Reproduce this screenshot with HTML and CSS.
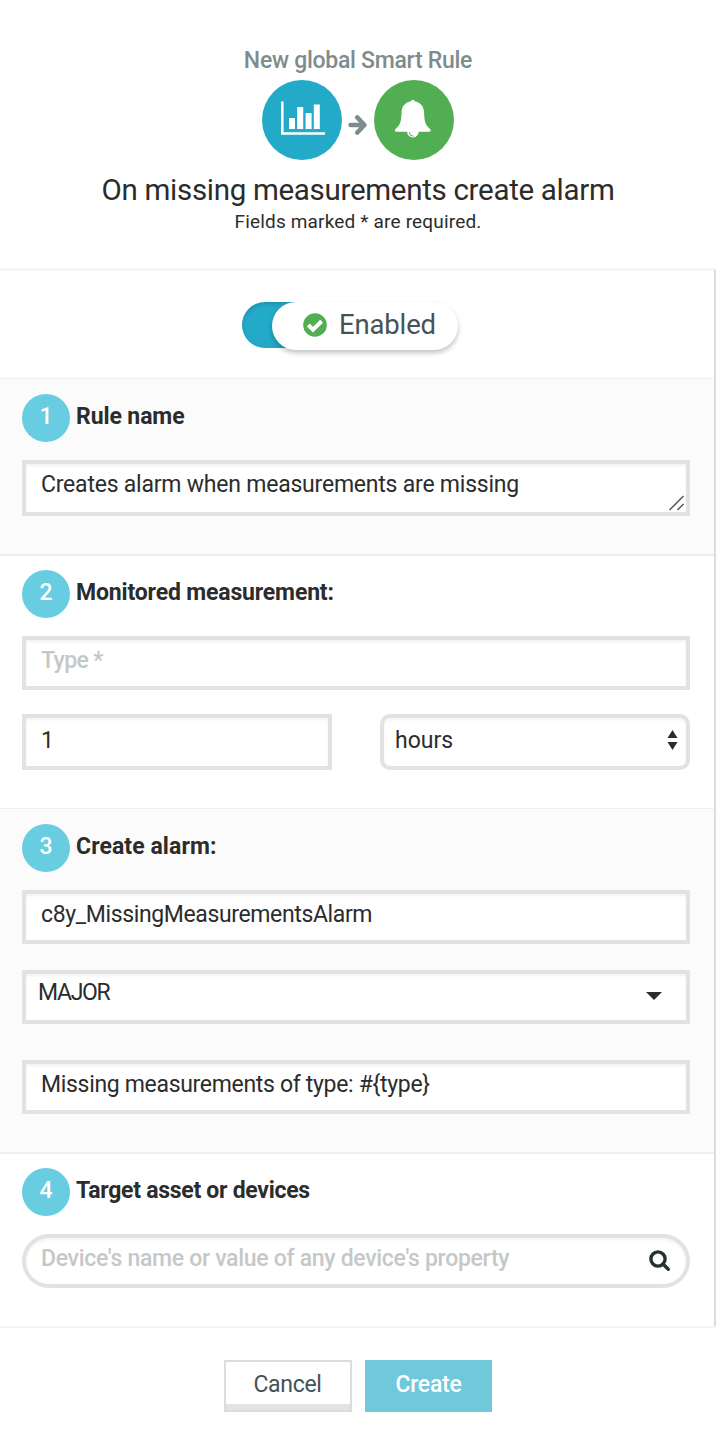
FILE: index.html
```html
<!DOCTYPE html>
<html lang="en">
<head>
<meta charset="utf-8">
<title>New global Smart Rule</title>
<link rel="stylesheet" href="styles.css">
</head>
<body>
<div class="modal">
  <header class="head">
    <div class="kicker"><span class="t-kicker">New global Smart Rule</span></div>
    <div class="icons">
      <span class="disc disc-blue">
        <svg width="80" height="80" viewBox="0 0 80 80"><path d="M20.300 21.500V53.500H63" fill="none" stroke="#fff" stroke-width="2.600"/><path d="M27 38h6v11h-6zM35.200 27h6v22h-6zM43.600 33h6v16h-6zM51.800 24.500h6v24.500h-6z" fill="#fff"/></svg>
      </span>
      <svg class="arrow" width="20" height="22" viewBox="0 0 20 22"><path d="M2.500 11H15M9.200 3.400L16.500 11L9.200 18.600" fill="none" stroke="#7f8c8d" stroke-width="4.500" stroke-linecap="round" stroke-linejoin="round"/></svg>
      <span class="disc disc-green">
        <svg width="80" height="80" viewBox="0 0 80 80"><g transform="translate(-.6 -.3)"><path d="M37.300 21.500a2.200 2.200 0 0 1 4.200 0C47.500 23 50.500 27 50.700 33C50.900 41 51.800 45 56 48.500C58 50.200 57.500 52 55.500 52H45.300a5.800 5.800 0 0 1-11.600 0H23.500C21.300 52 20.800 50.200 22.800 48.500C27 45 27.900 41 28.100 33C28.300 27 31.300 23 37.300 21.500z" fill="#fff"/><path d="M36 52.500a4 4 0 0 0 4 4" fill="none" stroke="#52ae52" stroke-width="1"/></g></svg>
      </span>
    </div>
    <h1 class="title"><span class="t-title">On missing measurements create alarm</span></h1>
    <p class="note"><span class="t-note">Fields marked * are required.</span></p>
  </header>
  <main class="body">
    <section class="toggle-row">
      <div class="track">
        <div class="knob">
          <svg width="24" height="24" viewBox="0 0 24 24"><circle cx="12" cy="12" r="11.800" fill="#52ae52"/><path d="M5.300 12L10 16.600L18.600 8.200" fill="none" stroke="#fff" stroke-width="4"/></svg>
          <span class="t-enabled">Enabled</span>
        </div>
      </div>
    </section>
    <section class="step shade s1">
      <h2 class="label"><span class="num">1</span><span class="t-l1">Rule name</span></h2>
      <div class="field area"><span class="t-creates">Creates alarm when measurements are missing</span>
        <svg class="grip" width="16" height="16" viewBox="0 0 16 16"><path d="M.5 15L14.500 1M8.500 15L14.500 9" stroke="#555" stroke-width="1.500" fill="none"/></svg>
      </div>
    </section>
    <section class="step s2">
      <h2 class="label"><span class="num">2</span><span class="t-l2">Monitored measurement:</span></h2>
      <div class="field type"><span class="hint t-type">Type *</span></div>
      <div class="pair">
        <div class="field tall"><span>1</span></div>
        <div class="field tall select"><span class="t-hours">hours</span>
          <svg width="12" height="20" viewBox="0 0 12 20"><path d="M.500 8L5.500 0L10.500 8zM.500 12L5.500 20L10.500 12z" fill="#2c2c2c"/></svg>
        </div>
      </div>
    </section>
    <section class="step shade s3">
      <h2 class="label"><span class="num">3</span><span class="t-l3">Create alarm:</span></h2>
      <div class="field"><span class="t-c8y">c8y_MissingMeasurementsAlarm</span></div>
      <div class="field major"><span class="t-major">MAJOR</span>
        <svg width="16" height="8" viewBox="0 0 16 8"><path d="M0 0H16L8 8z" fill="#2c2c2c"/></svg>
      </div>
      <div class="field missing"><span class="t-missing">Missing measurements of type: #{type}</span></div>
    </section>
    <section class="step s4">
      <h2 class="label"><span class="num">4</span><span class="t-l4">Target asset or devices</span></h2>
      <div class="field search"><span class="hint t-device">Device's name or value of any device's property</span>
        <svg width="22" height="22" viewBox="0 0 22 22"><circle cx="9" cy="9" r="7.100" fill="none" stroke="#263032" stroke-width="3.400"/><path d="M14 14L19.300 19.300" stroke="#263032" stroke-width="3.400" stroke-linecap="round"/></svg>
      </div>
    </section>
  </main>
  <footer class="foot">
    <button class="btn cancel"><span class="t-cancel">Cancel</span></button>
    <button class="btn create"><span class="t-create">Create</span></button>
  </footer>
</div>
</body>
</html>
```
FILE: styles.css
```css
* { box-sizing: border-box; margin: 0; padding: 0; }
body { background: #fff; color: #2c2c2c; font-family: Roboto, "Liberation Sans", sans-serif; font-size: 23px; line-height: 24px; }
svg { display: block; flex: none; }
span { white-space: nowrap; }
.modal { width: 716px; height: 1444px; }

/* Header */
.head { height: 271px; padding-top: 49px; border-bottom: 3px solid #f4f4f4; display: flex; flex-direction: column; align-items: center; }
.kicker { height: 31px; color: #7f8c8d; font-weight: 500; }
.icons { display: flex; height: 80px; width: 192px; justify-content: space-between; align-items: center; }
.disc { width: 80px; height: 80px; border-radius: 50%; }
.disc-blue { background: #23aac8; }
.disc-green { background: #52ae52; }
.arrow { margin-top: 10px; }
.title { font-size: 29.5px; font-weight: 400; line-height: 40px; margin-top: 10px; }
.note { font-size: 19px; line-height: 24px; }

/* Scrollable form */
.body { border-right: 2px solid #d8dddd; margin-top: -1px; height: 1056px; }
.toggle-row { height: 108px; padding: 32px 0 0 242px; }
.track { width: 212px; height: 46px; border-radius: 23px; background: #23aac8; padding-left: 30px; box-shadow: inset 0 2px 4px rgba(0,0,0,.15); }
.knob { width: 186px; height: 48px; border-radius: 24px; background: #fff; box-shadow: 0 3px 5px rgba(0,0,0,.24); display: flex; align-items: center; padding: 0 0 3px 31px; gap: 12px; font-size: 27.5px; color: #455356; }
.step { padding: 14px 24px 0 22px; border-top: 2px solid #eee; }
.shade { background: #fbfbfb; }
.s1, .s3 { border-top-width: 1px; padding-top: 15px; }
.s1 { height: 176px; }
.s2 { height: 254px; }
.s3 { height: 344px; }
.s4 { height: 174px; }
.label { display: flex; align-items: flex-start; gap: 6px; height: 66px; font-size: 23px; font-weight: 700; line-height: 45px; }
.num { width: 48px; height: 48px; border-radius: 50%; background: #69cde1; color: #fff; text-align: center; font-weight: 500; }

/* Fields */
.field { height: 54px; border: 4px solid #e0e2e4; background: #fff; box-shadow: inset 0 2px 3px rgba(0,0,0,.05); padding: 9px 15px 0 15px; display: flex; justify-content: space-between; align-items: flex-start; }
.area { height: 56px; padding-right: 1px; }
.grip { margin-top: 22px; }
.hint { color: #c4c8c8; font-weight: 500; }
.pair { display: grid; grid-template-columns: 310px 310px; gap: 48px; margin-top: 24px; }
.tall { height: 56px; padding-top: 11px; }
.select { border-radius: 10px; padding-left: 11px; padding-right: 7px; }
.select svg { margin-top: 1px; }
.major { margin-top: 26px; padding: 7px 24px 0 12px; }
.major svg { margin-top: 11px; }
.missing { margin-top: 36px; }
.search { border-radius: 27px; }
.search svg { margin-top: 3px; }

/* Footer */
.foot { border-top: 2px solid #f5f5f5; display: flex; justify-content: center; gap: 13px; padding-top: 32px; }
.btn { height: 52px; font: inherit; display: flex; justify-content: center; padding-top: 13px; }
.cancel { width: 128px; border: 2px solid #d8dddd; background: #fff; box-shadow: inset 0 -6px #e3e3e3; color: #455356; padding-top: 11px; }
.create { width: 127px; border: 0; background: #70c8db; color: #fff; font-weight: 500; }

/* Tracking */
.t-kicker { letter-spacing: -.28px; }
.t-title { letter-spacing: -.3px; }
.t-note { letter-spacing: .17px; }
.t-enabled { letter-spacing: -.15px; }
.t-l1 { letter-spacing: -.1px; }
.t-l2 { letter-spacing: -.16px; }
.t-l3 { letter-spacing: .08px; }
.t-l4 { letter-spacing: -.28px; }
.t-creates { letter-spacing: -.22px; }
.t-type { letter-spacing: -.65px; }
.t-c8y { letter-spacing: -.37px; }
.t-major { letter-spacing: -1.3px; }
.t-missing { letter-spacing: -.32px; }
.t-device { letter-spacing: -.3px; }
.t-cancel { letter-spacing: -.3px; margin-right: 1px; }
.t-create { letter-spacing: -.25px; }
```
